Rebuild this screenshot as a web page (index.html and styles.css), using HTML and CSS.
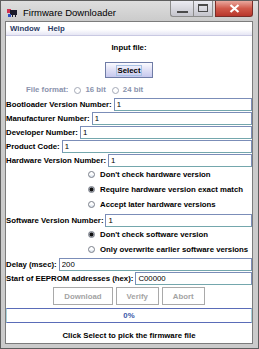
FILE: index.html
```html
<!DOCTYPE html>
<html lang="en">
<head>
    <meta charset="UTF-8">
    <title>Firmware Downloader</title>
    <link rel="stylesheet" href="styles.css">
</head>
<body>
    <div class="window">
        <!-- Title bar -->
        <div class="titlebar">
            <svg class="app-icon" width="10" height="9" viewBox="0 0 10 9">
                <rect x="0" y="1" width="4" height="4" fill="#d03050"/>
                <rect x="3" y="2" width="7" height="5" fill="#1a1a2a"/>
                <rect x="1" y="6" width="3" height="3" fill="#3050c0"/>
                <rect x="5" y="7" width="1" height="2" fill="#1a1a2a"/>
                <rect x="8" y="7" width="1" height="2" fill="#1a1a2a"/>
            </svg>
            <span class="title">Firmware Downloader</span>
            <div class="controls">
                <span class="ctl min"><i></i></span>
                <span class="ctl max"><i></i></span>
                <span class="ctl close">
                    <svg width="11" height="9" viewBox="0 0 11 9">
                        <path d="M1.5 1 L9.5 8 M9.5 1 L1.5 8" stroke="#fff" stroke-width="2.2"/>
                    </svg>
                </span>
            </div>
        </div>

        <div class="client">
            <div class="menubar">
                <span>Window</span>
                <span>Help</span>
            </div>

            <div class="content">
                <div class="heading">Input file:</div>
                <div class="center">
                    <button class="select-btn"><span>Select</span></button>
                </div>

                <div class="format">
                    <span>File format:</span>
                    <span class="radio off"></span><span>16 bit</span>
                    <span class="radio off"></span><span>24 bit</span>
                </div>

                <!-- Version fields -->
                <div class="fields">
                    <div class="row"><label>Bootloader Version Number:</label><input type="text" value="1"></div>
                    <div class="row"><label>Manufacturer Number:</label><input type="text" value="1"></div>
                    <div class="row"><label>Developer Number:</label><input type="text" value="1"></div>
                    <div class="row"><label>Product Code:</label><input type="text" value="1"></div>
                    <div class="row"><label>Hardware Version Number:</label><input type="text" value="1"></div>
                </div>

                <div class="options">
                    <div class="option"><span class="radio"></span>Don't check hardware version</div>
                    <div class="option"><span class="radio on"></span>Require hardware version exact match</div>
                    <div class="option"><span class="radio"></span>Accept later hardware versions</div>
                </div>

                <div class="fields sw">
                    <div class="row"><label>Software Version Number:</label><input type="text" value="1"></div>
                </div>

                <div class="options">
                    <div class="option"><span class="radio on"></span>Don't check software version</div>
                    <div class="option"><span class="radio"></span>Only overwrite earlier software versions</div>
                </div>

                <div class="fields addr">
                    <div class="row"><label>Delay (msec):</label><input type="text" value="200"></div>
                    <div class="row"><label>Start of EEPROM addresses (hex):</label><input type="text" value="C00000"></div>
                </div>

                <div class="actions">
                    <button disabled>Download</button>
                    <button disabled>Verify</button>
                    <button disabled>Abort</button>
                </div>

                <div class="progress">0%</div>

                <div class="status">Click Select to pick the firmware file</div>
            </div>
        </div>
    </div>
</body>
</html>
```

FILE: styles.css
```css
* { margin: 0; padding: 0; box-sizing: border-box; }
body { width: 259px; height: 349px; overflow: hidden; background: #fff; font-family: "Liberation Sans", Arial, sans-serif; }

.window {
    width: 259px;
    height: 349px;
    border: 1px solid #5e5e5e;
    background: linear-gradient(#dedede, #cbcbcb 20px);
    display: flex;
    flex-direction: column;
}

/* title bar */
.titlebar { height: 20px; display: flex; align-items: center; padding-left: 6px; }
.app-icon { margin-right: 6px; margin-top: 3px; }
.title { font-size: 9.5px; color: #000; padding-top: 3px; }
.controls { margin-left: auto; margin-right: 5px; align-self: flex-start; display: flex; }
.ctl { height: 16px; display: flex; align-items: center; justify-content: center; border: 1px solid #8c8c8c; border-top: none; }
.min { width: 23px; background: linear-gradient(#ececf2, #c4c4cc); border-radius: 0 0 0 3px; border-right: none; }
.min i { width: 11px; height: 2px; background: #4a4a4a; margin-top: 7px; }
.max { width: 20px; background: linear-gradient(#ececf2, #c4c4cc); }
.max i { width: 10px; height: 8px; border: 1px solid #4a4a4a; border-top-width: 2px; margin-top: -2px; }
.close { width: 38px; margin-left: 2px; background: linear-gradient(#eaa89e, #d0594a 50%, #b8362c); border-color: #7a2d28; border-radius: 0 0 3px 0; }

/* client area */
.client {
    flex: 1;
    margin: 0 5px 4px 4px;
    border: 1px solid #7c7c7c;
    background: #fff;
    display: flex;
    flex-direction: column;
    font-size: 7.8px;
    font-weight: bold;
    color: #000;
}
.menubar {
    height: 14px;
    display: flex;
    align-items: center;
    background: linear-gradient(#fff 55%, #e6e6f4);
    border-bottom: 1px solid #c9c9e2;
    color: #2a3a64;
}
.menubar span { padding: 0 4px; }

.content { flex: 1; display: flex; flex-direction: column; }
.heading { margin-top: 6px; line-height: 12px; text-align: center; }
.center { margin-top: 8px; display: flex; justify-content: center; }
.select-btn {
    height: 16px;
    padding: 0 10px;
    border: 1px solid #6f7ca6;
    background: linear-gradient(#fbfbff, #e2e2f6 45%, #c6c8ee);
    font: inherit;
    color: #000;
    display: flex;
    align-items: center;
}
.select-btn span { border: 1px solid #a8c2e4; padding: 0 1px; line-height: 9px; }

.format { margin-top: 6px; line-height: 12px; padding-left: 20px; display: flex; align-items: center; color: #8a93ad; }
.format .radio { margin: 0 4px 0 6px; }

/* radios */
.radio {
    width: 7px;
    height: 7px;
    border-radius: 50%;
    border: 1px solid #7a7f8a;
    background: linear-gradient(#fff 40%, #d4deea);
    display: inline-block;
    flex: none;
}
.radio.off { border-color: #a4a9b6; background: #fff; }
.radio.on { background: radial-gradient(circle, #111 0 1.6px, #9a9ea6 2.2px); }

/* text field rows */
.fields { margin-top: 2px; display: flex; flex-direction: column; gap: 1px; }
.fields.addr { margin-top: 1px; }
.row { display: flex; align-items: center; height: 13px; }
.row label { white-space: nowrap; }
.row input {
    flex: 1;
    min-width: 0;
    height: 13px;
    margin-left: 2px;
    border: 1px solid #7b8db8;
    border-bottom-color: #74a7ad;
    padding: 0 2px;
    font: 7.8px "Liberation Sans", Arial, sans-serif;
    color: #000;
    outline: none;
}

.options { display: flex; flex-direction: column; }
.option { height: 15px; display: flex; align-items: center; padding-left: 82px; white-space: nowrap; }
.option .radio { margin-right: 5px; }

.actions { margin-top: 2px; display: flex; justify-content: center; gap: 3px; }
.actions button {
    height: 18px;
    padding: 0 10px;
    border: 1px solid #a9a9a9;
    background: #fff;
    font: inherit;
    color: #a3a3a3;
}

.progress {
    margin-top: 3px;
    height: 15px;
    line-height: 13px;
    text-align: center;
    border: 1px solid #a9d2dc;
    border-top-color: #5a6cb8;
    border-bottom-color: #5a6cb8;
    color: #3a58a8;
}

.status { flex: 1; padding-top: 8px; line-height: 10px; text-align: center; }
```
